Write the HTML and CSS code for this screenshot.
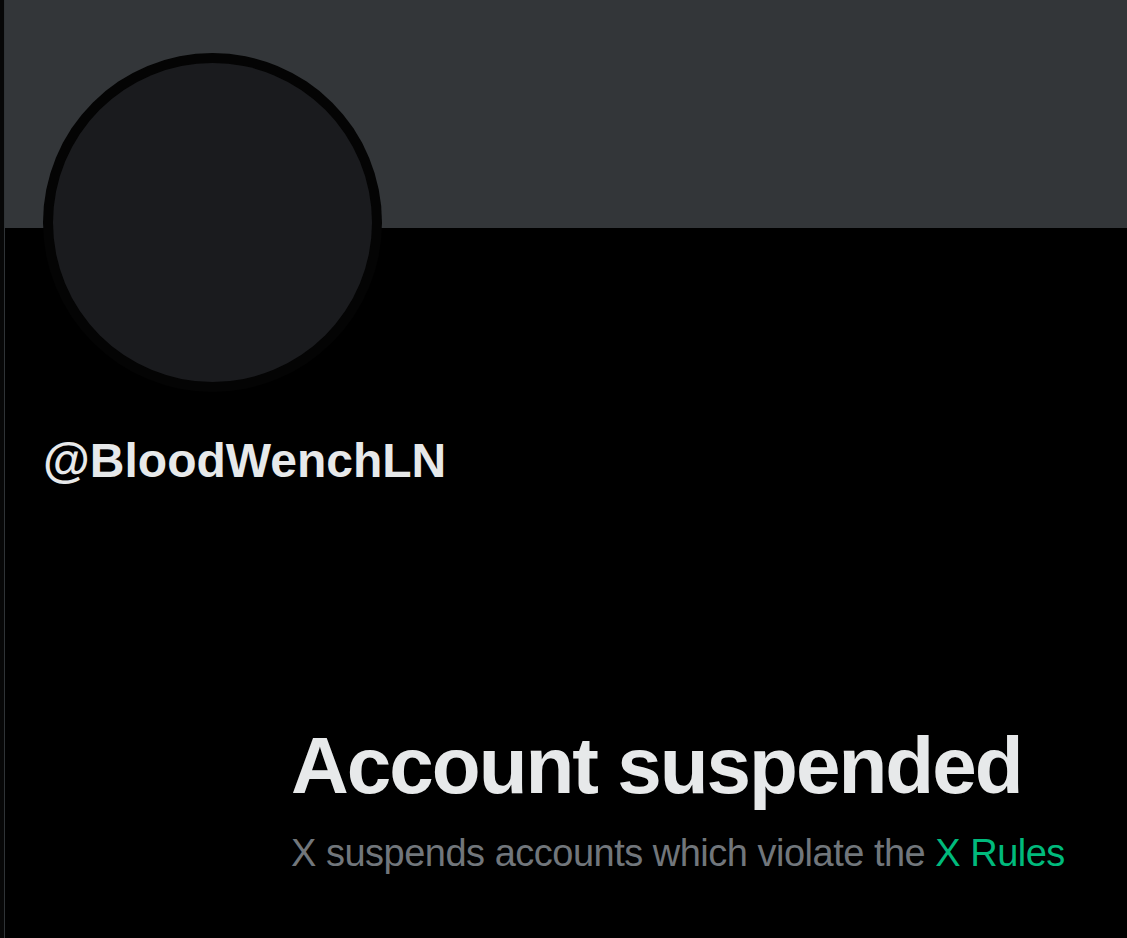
FILE: index.html
```html
<!DOCTYPE html>
<html lang="en">
<head>
<meta charset="utf-8">
<title>@BloodWenchLN</title>
<link rel="stylesheet" href="styles.css">
</head>
<body>
<div class="page">
  <main class="column">
    <div class="banner"></div>
    <div class="profile-head">
      <div class="avatar"><div class="avatar-inner"></div></div>
      <div class="handle">@BloodWenchLN</div>
    </div>
    <section class="notice">
      <h1 class="notice-title">Account suspended</h1>
      <p class="notice-text">X suspends accounts which violate the <a class="notice-link" href="#">X Rules</a></p>
    </section>
  </main>
</div>
</body>
</html>
```

FILE: styles.css
```css
html, body {
  margin: 0;
  padding: 0;
  background: #000;
  height: 100%;
}
body {
  font-family: "Liberation Sans", Arial, sans-serif;
  color: #e7e9ea;
  overflow: hidden;
}
.page {
  display: flex;
  height: 938px;
  padding-left: 4px;
  background: #070707;
  box-sizing: border-box;
}
.column {
  flex: 1;
  display: flex;
  flex-direction: column;
  border-left: 1px solid #2f3336;
  background: #000;
}
.banner {
  height: 228px;
  background: #333639;
}
.profile-head {
  padding-left: 38px;
  display: flex;
  flex-direction: column;
  align-items: flex-start;
}
.avatar {
  margin-top: -175px;
  width: 339px;
  height: 339px;
  border-radius: 50%;
  background: #040404;
  display: flex;
  align-items: center;
  justify-content: center;
}
.avatar-inner {
  width: 319px;
  height: 319px;
  border-radius: 50%;
  background: #1a1b1e;
}
.handle {
  margin-top: 40px;
  font-size: 48px;
  font-weight: 700;
  line-height: 1.2;
  color: #e7e9ea;
}
.notice {
  margin-top: 228px;
  padding-left: 286px;
}
.notice-title {
  margin: 0;
  font-size: 80px;
  font-weight: 700;
  line-height: 1.2;
  letter-spacing: -2px;
  color: #e7e9ea;
}
.notice-text {
  margin: 17px 0 0;
  font-size: 38px;
  line-height: 1.2;
  letter-spacing: -0.5px;
  color: #71767b;
}
.notice-link {
  color: #00ba7c;
  text-decoration: none;
}
```
